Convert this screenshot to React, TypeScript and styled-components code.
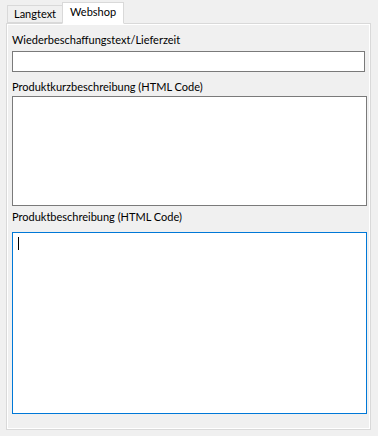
import React from 'react';
import styled, { createGlobalStyle } from 'styled-components';

const GlobalStyle = createGlobalStyle`
    html, body {
        margin: 0;
        padding: 0;
        background: #f0f0f0;
    }
    body {
        font-family: "Segoe UI", Lato, "Open Sans", sans-serif;
        font-size: 11px;
        color: #000;
    }
`;

const Window = styled.div`
    width: 378px;
    height: 436px;
    box-sizing: border-box;
    padding: 2px 7px 6px 6px;
    display: flex;
    flex-direction: column;
`;

const TabStrip = styled.div`
    display: flex;
    align-items: flex-end;
    height: 21px;
    padding-left: 1px;
    position: relative;
    z-index: 1;
`;

const Tab = styled.div<{ $active?: boolean }>`
    box-sizing: border-box;
    height: ${({ $active }) => ($active ? '22px' : '18px')};
    padding: 0 ${({ $active }) => ($active ? '7px' : '6px')};
    margin-left: ${({ $active }) => ($active ? '-1px' : '0')};
    margin-bottom: ${({ $active }) => ($active ? '-1px' : '0')};
    padding-bottom: ${({ $active }) => ($active ? '3px' : '1px')};
    display: flex;
    align-items: center;
    background: ${({ $active }) => ($active ? '#ffffff' : '#f0f0f0')};
    border: 1px solid #d9d9d9;
    border-bottom-color: ${({ $active }) => ($active ? '#ffffff' : '#d9d9d9')};
    line-height: 1;
`;

const Panel = styled.div`
    flex: 1;
    box-sizing: border-box;
    border: 1px solid #d9d9d9;
    box-shadow: inset 0 0 0 1px #ffffff;
    background: #f0f0f0;
    padding: 6px 5px 0 5px;
    display: flex;
    flex-direction: column;
`;

const Label = styled.div<{ $gap?: number }>`
    height: 16px;
    line-height: 16px;
    margin-top: ${({ $gap }) => $gap ?? 0}px;
    white-space: nowrap;
`;

const Field = styled.div<{ $h: number; $w: number; $focus?: boolean; $top: number }>`
    box-sizing: border-box;
    width: ${({ $w }) => $w}px;
    height: ${({ $h }) => $h}px;
    margin-top: ${({ $top }) => $top}px;
    background: #ffffff;
    border: 1px solid ${({ $focus }) => ($focus ? '#0078d7' : '#7a7a7a')};
    padding: 4px 5px;
`;

const Caret = styled.span`
    display: block;
    width: 1px;
    height: 13px;
    background: #000;
`;

export default function App() {
    return (
        <>
            <GlobalStyle />
            <Window>
                <TabStrip>
                    <Tab>Langtext</Tab>
                    <Tab $active>Webshop</Tab>
                </TabStrip>
                <Panel>
                    <Label $gap={2}>Wiederbeschaffungstext/Lieferzeit</Label>
                    <Field $w={353} $h={21} $top={3} />
                    <Label $gap={7}>Produktkurzbeschreibung (HTML Code)</Label>
                    <Field $w={355} $h={110} $top={1} />
                    <Label $gap={3}>Produktbeschreibung (HTML Code)</Label>
                    <Field $w={355} $h={182} $top={7} $focus>
                        <Caret />
                    </Field>
                </Panel>
            </Window>
        </>
    );
}
